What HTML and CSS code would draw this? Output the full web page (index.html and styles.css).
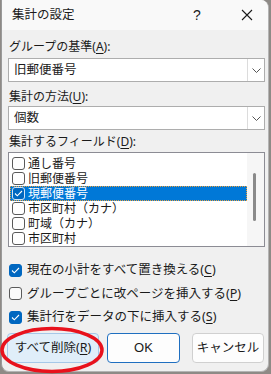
FILE: index.html
```html
<!DOCTYPE html>
<html lang="ja">
<head>
<meta charset="utf-8">
<link rel="stylesheet" href="styles.css">
</head>
<body>
<div class="window">
  <div class="titlebar">
    <span class="title">集計の設定</span>
    <span class="help">?</span>
    <svg class="close" width="12" height="12" viewBox="0 0 12 12"><path d="M1 1L11 11M11 1L1 11" stroke="#1a1a1a" stroke-width="1.1" fill="none"/></svg>
  </div>
  <div class="content">
    <div class="label l1">グループの基準(<u>A</u>):</div>
    <div class="combo">
      <span class="combo-text">旧郵便番号</span>
      <span class="combo-btn"><svg width="9" height="5" viewBox="0 0 9 5"><path d="M0.5 0.5L4.5 4.5L8.5 0.5" stroke="#555" stroke-width="1" fill="none"/></svg></span>
    </div>
    <div class="label l2">集計の方法(<u>U</u>):</div>
    <div class="combo">
      <span class="combo-text">個数</span>
      <span class="combo-btn"><svg width="9" height="5" viewBox="0 0 9 5"><path d="M0.5 0.5L4.5 4.5L8.5 0.5" stroke="#555" stroke-width="1" fill="none"/></svg></span>
    </div>
    <div class="label l3">集計するフィールド(<u>D</u>):</div>
    <div class="listbox">
      <div class="items">
        <div class="item"><span class="cb"></span><span>通し番号</span></div>
        <div class="item"><span class="cb"></span><span>旧郵便番号</span></div>
        <div class="item selected"><span class="cb checked"><svg width="9" height="7" viewBox="0 0 9 7"><path d="M1 3.5L3.3 5.8L8 1" stroke="#fff" stroke-width="1.1" fill="none"/></svg></span><span>現郵便番号</span></div>
        <div class="item"><span class="cb"></span><span>市区町村（カナ）</span></div>
        <div class="item"><span class="cb"></span><span>町域（カナ）</span></div>
        <div class="item"><span class="cb"></span><span>市区町村</span></div>
      </div>
      <div class="scrollbar"><div class="thumb"></div></div>
    </div>
    <div class="checks">
      <div class="check"><span class="box on"><svg width="9" height="7" viewBox="0 0 9 7"><path d="M1 3.5L3.3 5.8L8 1" stroke="#fff" stroke-width="1.1" fill="none"/></svg></span><span>現在の小計をすべて置き換える(<u>C</u>)</span></div>
      <div class="check"><span class="box"></span><span>グループごとに改ページを挿入する(<u>P</u>)</span></div>
      <div class="check"><span class="box on"><svg width="9" height="7" viewBox="0 0 9 7"><path d="M1 3.5L3.3 5.8L8 1" stroke="#fff" stroke-width="1.1" fill="none"/></svg></span><span>集計行をデータの下に挿入する(<u>S</u>)</span></div>
    </div>
    <div class="buttons">
      <button class="btn btn-del">すべて削除(<u>R</u>)</button>
      <button class="btn btn-ok">OK</button>
      <button class="btn btn-cancel">キャンセル</button>
    </div>
  </div>
</div>
<svg class="ellipse" width="106" height="50" viewBox="0 0 106 50"><ellipse cx="52" cy="24" rx="50" ry="21.5" stroke="#e8121c" stroke-width="3.5" fill="none"/></svg>
</body>
</html>
```
FILE: styles.css
```css
html, body {
  margin: 0;
  padding: 0;
}
body {
  width: 271px;
  height: 374px;
  background: #8e8a86;
  position: relative;
  overflow: hidden;
  font-family: "Noto Sans", "Noto Sans CJK JP", sans-serif;
  font-size: 12px;
  line-height: 16px;
  color: #1a1a1a;
}
.window {
  width: 266px;
  height: 371px;
  margin-left: 1px;
  background: #f0f0f0;
  border: 1px solid #b4b4b4;
  border-top: none;
  border-left-color: #9a9a9a;
  border-radius: 0 8px 8px 8px;
  display: flex;
  flex-direction: column;
  overflow: hidden;
}
.titlebar {
  height: 30px;
  background: #f9f9f9;
  display: flex;
  align-items: center;
  padding-left: 10px;
  flex-shrink: 0;
}
.title {
  font-size: 12.5px;
  flex: 1;
}
.help {
  font-family: "Liberation Sans", sans-serif;
  font-size: 14px;
  width: 10px;
  margin-right: 38px;
}
.close {
  margin-right: 15px;
}
.content {
  padding: 0 3px 0 6px;
  display: flex;
  flex-direction: column;
}
.label {
  height: 16px;
  line-height: 16px;
  padding-left: 1px;
  white-space: nowrap;
}
u {
  text-decoration: underline;
  text-underline-offset: 2px;
}
.l1 { margin-top: 9px; }
.l2 { margin-top: 7px; }
.l3 { margin-top: 4px; }
.combo {
  margin-top: 3px;
  height: 22px;
  background: #fff;
  border: 1px solid #adadad;
  display: flex;
  align-items: stretch;
}
.l2 + .combo { margin-top: 1px; }
.combo-text {
  flex: 1;
  padding-left: 5px;
  line-height: 22px;
  font-size: 12.5px;
}
.combo-btn {
  width: 16px;
  border-left: 1px solid #dcdcdc;
  display: flex;
  align-items: center;
  justify-content: center;
}
.listbox {
  margin-top: 2px;
  height: 93px;
  background: #fff;
  border: 1px solid #8c8c94;
  display: flex;
  overflow: hidden;
}
.items {
  flex: 1;
  padding-top: 3px;
  padding-left: 1px;
}
.item {
  height: 15px;
  line-height: 15px;
  display: flex;
  align-items: center;
  gap: 3px;
  padding-left: 2px;
  font-size: 12px;
  white-space: nowrap;
  overflow: hidden;
}
.item.selected {
  background: #0078d7;
  color: #fff;
  outline: 1px dotted #e8a040;
  outline-offset: -1px;
}
.cb {
  width: 11px;
  height: 11px;
  border: 1px solid #5a5a5a;
  border-radius: 3px;
  background: #fff;
  display: flex;
  align-items: center;
  justify-content: center;
  flex-shrink: 0;
}
.cb.checked {
  background: #0067c0;
  border-color: #cfe3f5;
}
.scrollbar {
  width: 17px;
  background: #f6f6f6;
  position: relative;
}
.thumb {
  position: absolute;
  left: 6px;
  top: 20px;
  width: 3px;
  height: 48px;
  background: #8a8a8a;
  border-radius: 2px;
}
.checks {
  margin-top: 15px;
  display: flex;
  flex-direction: column;
  gap: 7.5px;
}
.check {
  height: 16px;
  line-height: 16px;
  display: flex;
  align-items: center;
  gap: 5px;
  padding-left: 1px;
  font-size: 12.5px;
  white-space: nowrap;
}
.box {
  width: 11px;
  height: 11px;
  border: 1px solid #5a5a5a;
  border-radius: 3px;
  background: #fafafa;
  display: flex;
  align-items: center;
  justify-content: center;
  flex-shrink: 0;
}
.box.on {
  background: #0067c0;
  border-color: #0067c0;
}
.buttons {
  margin-top: 8px;
  display: flex;
  gap: 8px;
  margin-left: -1px;
}
.btn {
  height: 30px;
  line-height: 16px;
  border-radius: 4px;
  font-family: inherit;
  font-size: 12.5px;
  color: #1a1a1a;
  padding: 0;
  background: #fdfdfd;
  border: 1px solid #d0d0d0;
}
.btn-del {
  width: 92px;
  background: #e0eef9;
  border-color: #a6c8e8;
}
.btn-ok {
  width: 73px;
  border-color: #1f6fc0;
  font-family: "Liberation Sans", sans-serif;
  font-size: 13px;
}
.btn-cancel {
  width: 72px;
  margin-left: 4px;
}
.ellipse {
  position: absolute;
  left: 0;
  top: 326px;
}
```
